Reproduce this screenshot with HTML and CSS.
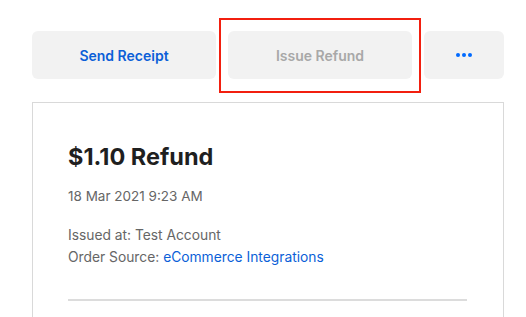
FILE: index.html
```html
<!DOCTYPE html>
<html lang="en">
<head>
    <meta charset="UTF-8">
    <meta name="viewport" content="width=device-width, initial-scale=1.0">
    <title>Refund</title>
    <link rel="stylesheet" href="styles.css">
</head>
<body>
    <div class="page">
        <div class="actions">
            <button class="action primary">Send Receipt</button>
            <div class="highlight-wrap">
                <button class="action disabled">Issue Refund</button>
                <span class="highlight"></span>
            </div>
            <button class="action more" aria-label="More">
                <svg width="16" height="4" viewBox="0 0 16 4"><circle cx="2" cy="2" r="2"/><circle cx="8" cy="2" r="2"/><circle cx="14" cy="2" r="2"/></svg>
            </button>
        </div>

        <div class="card">
            <h1>$1.10 Refund</h1>
            <div class="date">18 Mar 2021 9:23 AM</div>
            <div class="meta">
                <div>Issued at: Test Account</div>
                <div>Order Source: <a href="#">eCommerce Integrations</a></div>
            </div>
            <hr class="divider">
        </div>
    </div>
</body>
</html>
```

FILE: styles.css
```css
body { margin: 0; background: #fff; font-family: Inter, "Noto Sans", Arial, sans-serif; }
.page { padding: 31px 22px 0 32px; }
.actions { display: grid; grid-template-columns: 1fr 1fr 80px; gap: 12px; }
.action { height: 48px; border: none; border-radius: 6px; background: #f2f2f2; font-family: inherit; font-size: 14px; font-weight: 600; cursor: pointer; }
.primary { color: #0b5fd8; }
.disabled { color: #a8a8a8; cursor: default; width: 100%; }
.more { color: #006aff; display: flex; align-items: center; justify-content: center; }
.more svg { fill: #006aff; }
.highlight-wrap { position: relative; }
.highlight { position: absolute; left: -9px; top: -13px; right: -9px; bottom: -14px; border: 2px solid #f21f0f; pointer-events: none; }
.card { margin-top: 23px; border: 1px solid #d9d9d9; border-bottom: none; padding: 38px 36px 0 35px; height: 176px; }
h1 { margin: 0; font-size: 23.5px; font-weight: 700; color: #1f1f1f; line-height: 32px; }
.date { margin-top: 13px; font-size: 13.5px; color: #666; line-height: 20px; }
.meta { margin-top: 18px; font-size: 13.8px; color: #666; line-height: 22px; }
.meta a { color: #0b5fd8; text-decoration: none; }
.divider { margin: 31px 0 0; border: none; border-top: 2px solid #dcdcdc; }
```
